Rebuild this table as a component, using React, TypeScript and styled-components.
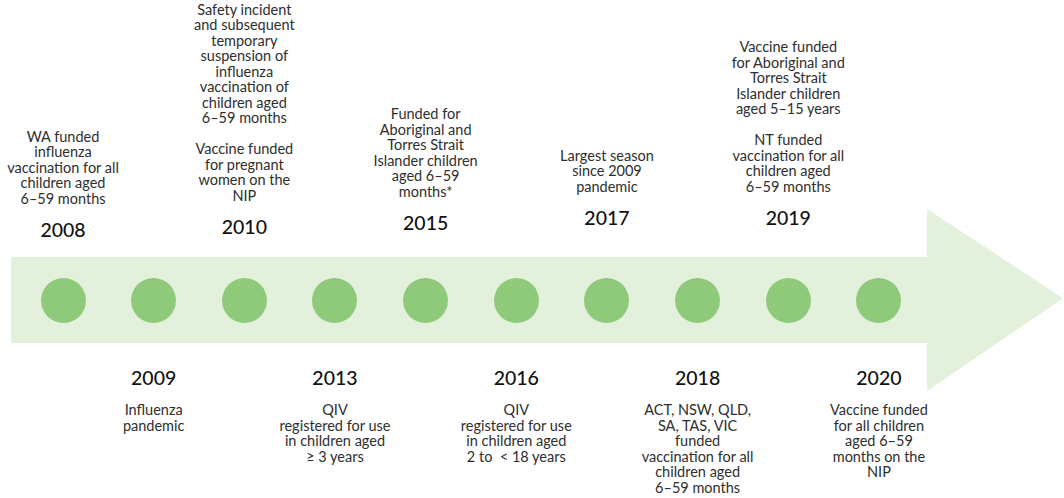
import styled, { createGlobalStyle } from "styled-components";

type Milestone = {
  year: string;
  notes: string[][];
  lift?: number;
};

const topEvents: (Milestone | null)[] = [
  {
    year: "2008",
    notes: [["WA funded", "influenza", "vaccination for all", "children aged", "6–59 months"]],
  },
  null,
  {
    year: "2010",
    lift: 3,
    notes: [
      [
        "Safety incident",
        "and subsequent",
        "temporary",
        "suspension of",
        "influenza",
        "vaccination of",
        "children aged",
        "6–59 months",
      ],
      ["Vaccine funded", "for pregnant", "women on the", "NIP"],
    ],
  },
  null,
  {
    year: "2015",
    lift: 7,
    notes: [
      ["Funded for", "Aboriginal and", "Torres Strait", "Islander children", "aged 6–59", "months*"],
    ],
  },
  null,
  {
    year: "2017",
    lift: 12,
    notes: [["Largest season", "since 2009", "pandemic"]],
  },
  null,
  {
    year: "2019",
    lift: 12,
    notes: [
      ["Vaccine funded", "for Aboriginal and", "Torres Strait", "Islander children", "aged 5–15 years"],
      ["NT funded", "vaccination for all", "children aged", "6–59 months"],
    ],
  },
  null,
];

const bottomEvents: (Milestone | null)[] = [
  null,
  { year: "2009", notes: [["Influenza", "pandemic"]] },
  null,
  {
    year: "2013",
    notes: [["QIV", "registered for use", "in children aged", "≥ 3 years"]],
  },
  null,
  {
    year: "2016",
    notes: [["QIV", "registered for use", "in children aged", "2 to  < 18 years"]],
  },
  null,
  {
    year: "2018",
    notes: [
      ["ACT, NSW, QLD,", "SA, TAS, VIC", "funded", "vaccination for all", "children aged", "6–59 months"],
    ],
  },
  null,
  {
    year: "2020",
    notes: [["Vaccine funded", "for all children", "aged 6–59", "months on the", "NIP"]],
  },
];

function Notes({ notes }: { notes: string[][] }) {
  return (
    <NoteBlock>
      {notes.map((para, i) => (
        <Paragraph key={i}>
          {para.map((line, j) => (
            <Line key={j}>{line}</Line>
          ))}
        </Paragraph>
      ))}
    </NoteBlock>
  );
}

function App() {
  return (
    <>
      <GlobalStyle />
      <Page>
        <TopRow>
          {topEvents.map((ev, i) => (
            <TopCell key={i} $lift={ev?.lift ?? 0}>
              {ev && (
                <>
                  <Notes notes={ev.notes} />
                  <Year>{ev.year}</Year>
                </>
              )}
            </TopCell>
          ))}
        </TopRow>

        <Track>
          <Band>
            {Array.from({ length: 10 }).map((_, i) => (
              <Dot key={i} />
            ))}
          </Band>
          <Head />
        </Track>

        <BottomRow>
          {bottomEvents.map((ev, i) => (
            <BottomCell key={i}>
              {ev && (
                <>
                  <Year>{ev.year}</Year>
                  <Notes notes={ev.notes} />
                </>
              )}
            </BottomCell>
          ))}
        </BottomRow>
      </Page>
    </>
  );
}

export default App;

const GlobalStyle = createGlobalStyle`
  html, body {
    margin: 0;
    padding: 0;
    background: #ffffff;
  }
  body {
    font-family: Lato, "Liberation Sans", Arial, sans-serif;
    color: #333333;
  }
`;

const Page = styled.div`
  width: 1064px;
  height: 498px;
  overflow: hidden;
  display: flex;
  flex-direction: column;
`;

const TopRow = styled.div`
  height: 242px;
  display: flex;
  align-items: flex-end;
  padding-left: 17.7px;
`;

const TopCell = styled.div<{ $lift: number }>`
  width: 90.67px;
  flex: none;
  display: flex;
  flex-direction: column;
  align-items: center;
  padding-bottom: ${(p) => p.$lift}px;
`;

const BottomRow = styled.div`
  display: flex;
  align-items: flex-start;
  padding-left: 17.7px;
  margin-top: 23px;
`;

const BottomCell = styled.div`
  width: 90.67px;
  flex: none;
  display: flex;
  flex-direction: column;
  align-items: center;
`;

const NoteBlock = styled.div`
  width: 140px;
  flex: none;
  display: flex;
  flex-direction: column;
  gap: 15.5px;
  text-align: center;
  font-size: 14.5px;
  line-height: 15.5px;
  color: #2e2e2e;
`;

const Paragraph = styled.div`
  display: flex;
  flex-direction: column;
`;

const Line = styled.span`
  white-space: pre;
`;

const Year = styled.div`
  font-size: 19.5px;
  line-height: 24px;
  font-weight: 500;
  color: #111111;
  margin: 12px 0;
  white-space: nowrap;

  &:first-child {
    margin-top: 0;
  }
  &:last-child {
    margin-bottom: 0;
  }
`;

const Track = styled.div`
  height: 86px;
  margin-top: 15px;
  display: flex;
  align-items: center;
  padding-left: 11px;
`;

const Band = styled.div`
  width: 916px;
  height: 86px;
  flex: none;
  background: #e3f1dc;
  display: flex;
  align-items: center;
  gap: 45.67px;
  padding-left: 29.5px;
  box-sizing: border-box;
`;

const Dot = styled.div`
  width: 45px;
  height: 45px;
  flex: none;
  border-radius: 50%;
  background: #8fc97a;
`;

const Head = styled.div`
  width: 136px;
  height: 182px;
  flex: none;
  background: #e3f1dc;
  clip-path: polygon(0 0, 100% 49%, 0 100%);
`;
